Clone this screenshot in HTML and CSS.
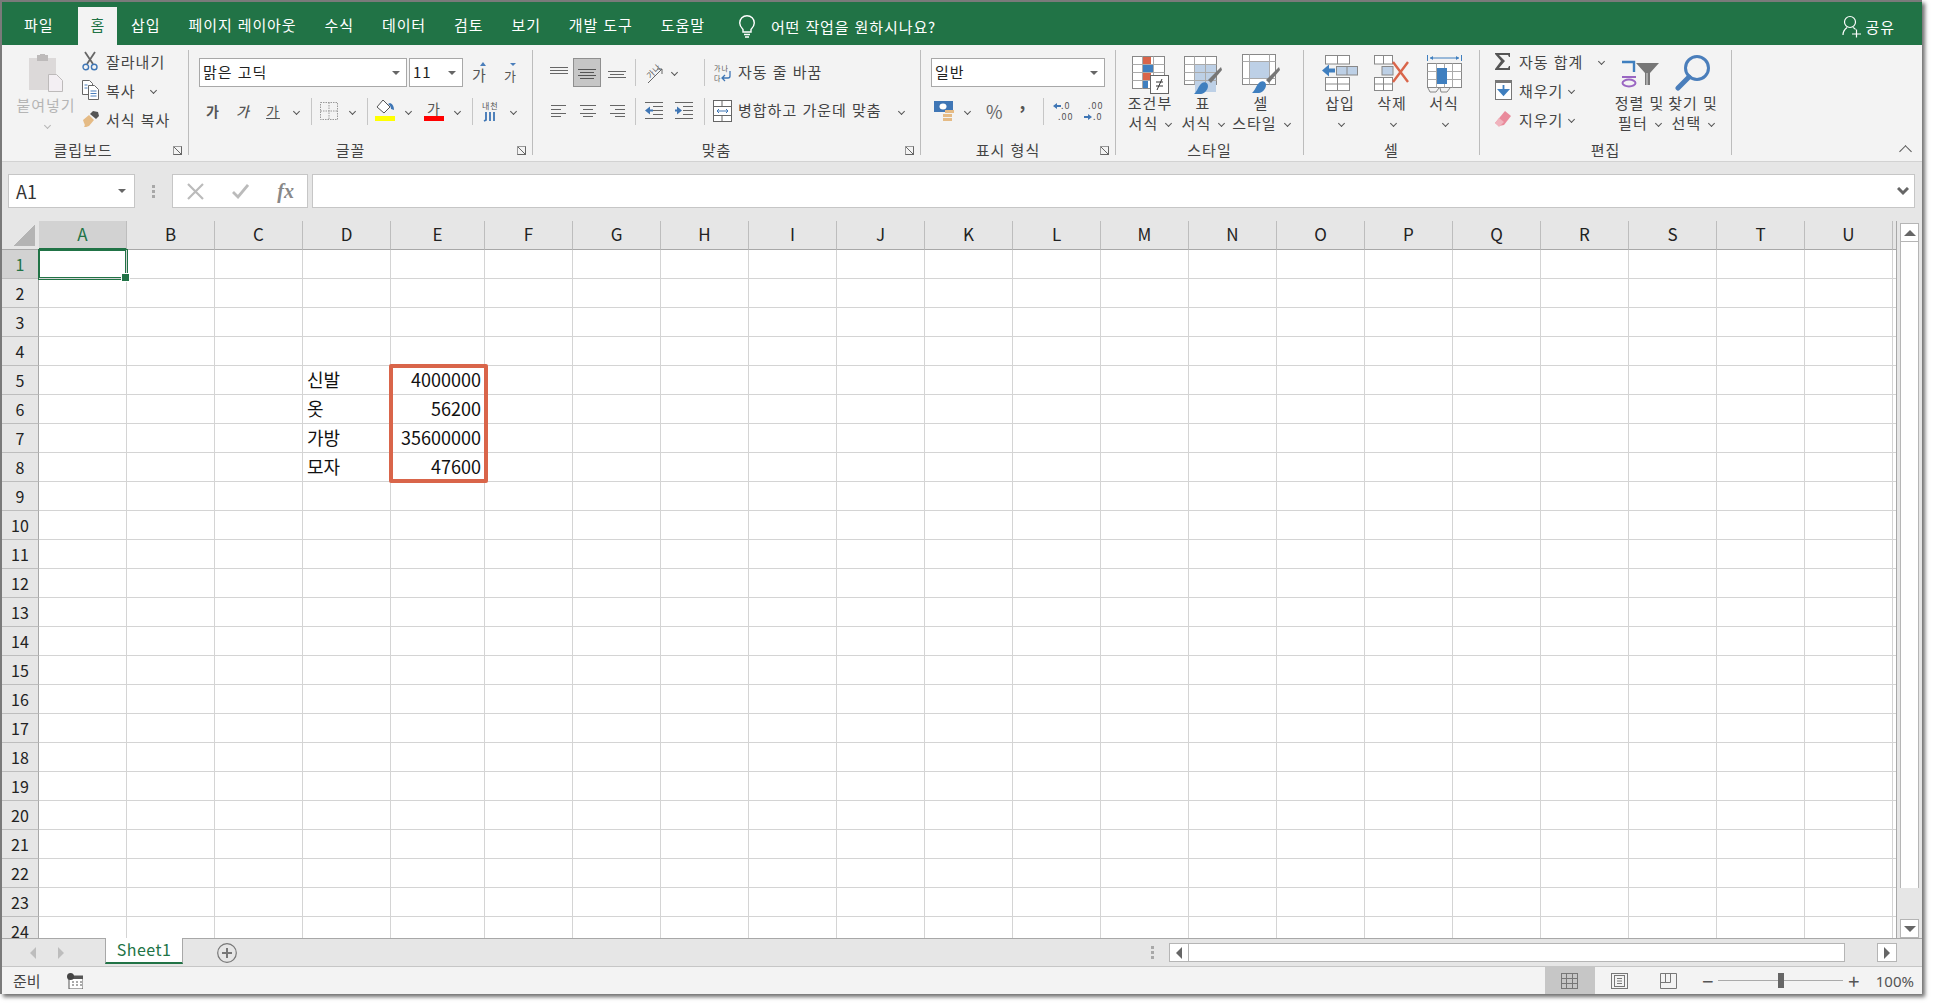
FILE: index.html
```html
<!DOCTYPE html>
<html lang="ko">
<head>
    <meta charset="UTF-8">
    <meta name="viewport" content="width=device-width, initial-scale=1.0">
    <title>Excel</title>
    <link rel="stylesheet" href="styles.css">
</head>
<body>
<div class="window">

    <!-- tabs -->
    <div class="tabbar">
        <div class="tab tab-first">파일</div>
        <div class="tab tab-active">홈</div>
        <div class="tab">삽입</div>
        <div class="tab">페이지 레이아웃</div>
        <div class="tab">수식</div>
        <div class="tab">데이터</div>
        <div class="tab">검토</div>
        <div class="tab">보기</div>
        <div class="tab">개발 도구</div>
        <div class="tab">도움말</div>
        <div class="tell-me">
            <svg width="18" height="24" viewBox="0 0 18 24" fill="none" stroke="#fff" stroke-width="1.4"><path d="M5 15.5C3 13.5 1.700 11.500 1.700 9a7.300 7.300 0 0 1 14.600 0c0 2.500-1.300 4.500-3.300 6.500V18H5z"/><path d="M6 20.500h6M7 23h4"/></svg>
            <span>어떤 작업을 원하시나요?</span>
        </div>
        <div class="share">
            <svg width="20" height="24" viewBox="0 0 20 24" fill="none" stroke="#fff" stroke-width="1.2"><circle cx="8" cy="8" r="5.500"/><path d="M1 21c0-4 2-6 4-7.500M11 13.500c1 .5 2 1.200 2.500 2M10 20h9M14.500 15.500v8"/></svg>
            <span>공유</span>
        </div>
    </div>

    <!-- ribbon -->
    <div class="ribbon">

        <div class="group group-clipboard">
            <div class="group-body">
                <div class="paste">
                    <svg width="34" height="38" viewBox="0 0 34 38"><rect x="0" y="4" width="27" height="32" fill="#dcd9d9"/><rect x="8" y="1" width="11" height="6" fill="#bdbaba"/><rect x="11" y="0" width="5" height="3" fill="#bdbaba"/><path d="M19.500 20.500h8l6 6v11h-14z" fill="#f3eff3" stroke="#bdbaba"/></svg>
                    <div class="big-label label-off">붙여넣기</div>
                    <div class="big-label"><i class="chev chev-off"></i></div>
                </div>
                <div class="small-rows">
                    <div class="small-row">
                        <span class="small-ico"><svg width="16" height="20" viewBox="0 0 16 20" fill="none"><path d="M3 1l8 12M13 1L5 13" stroke="#666" stroke-width="1.800"/><circle cx="3.800" cy="16" r="2.800" stroke="#3f76b5" stroke-width="1.400"/><circle cx="12.200" cy="16" r="2.800" stroke="#3f76b5" stroke-width="1.400"/></svg></span>
                        <span>잘라내기</span>
                    </div>
                    <div class="small-row">
                        <span class="small-ico"><svg width="17" height="20" viewBox="0 0 17 20" fill="#fff" stroke="#666"><path d="M.500.500h7l3 3v11H.500z"/><path d="M6.500 5.500h6l4 4v10h-10z"/><path d="M2.500 5h3M2.500 8h3M8.500 11h6M8.500 13.500h6M8.500 16h6" stroke="#4a7ebb"/></svg></span>
                        <span>복사</span>
                        <span class="chev-slot chev-copy"><i class="chev"></i></span>
                    </div>
                    <div class="small-row">
                        <span class="small-ico"><svg width="18" height="18" viewBox="0 0 18 18"><path d="M1 10l6-5 5 5-5 6c-2 1-4 1-5 1 1-1 1-3 0-4z" fill="#e5bb85"/><path d="M8 4l3-3 5 1 1 4-3 3z" fill="#555"/></svg></span>
                        <span>서식 복사</span>
                    </div>
                </div>
            </div>
            <div class="group-foot foot-clip"><span></span><span>클립보드</span><i class="launcher"></i></div>
        </div>

        <div class="group group-font">
            <div class="group-body rows">
                <div class="row row-top">
                    <div class="combo combo-font"><span>맑은 고딕</span><i class="caret"></i></div>
                    <div class="combo combo-size"><span>11</span><i class="caret"></i></div>
                    <span class="grow"><svg width="16" height="24" viewBox="0 0 16 24"><text x="0" y="20" class="ico-text" font-size="15">가</text><path d="M11 1l3 4H8z" fill="#4a7ebb"/></svg></span>
                    <span class="shrink"><svg width="14" height="24" viewBox="0 0 14 24"><text x="0" y="20" class="ico-text" font-size="13">가</text><path d="M9 5L6 2h6z" fill="#4a7ebb"/></svg></span>
                </div>
                <div class="row">
                    <span class="letter letter-bold">가</span>
                    <span class="letter letter-italic">가</span>
                    <span class="letter letter-under">가</span>
                    <span class="chev-slot"><i class="chev"></i></span>
                    <i class="sep"></i>
                    <div class="split">
                        <svg width="21" height="24" viewBox="0 0 21 24" fill="none" stroke="#999" stroke-dasharray="1.500 1"><rect x="1.500" y="3.500" width="17" height="17"/><path d="M10 3.500v17M1.500 12h17"/></svg>
                        <span class="chev-slot"><i class="chev"></i></span>
                    </div>
                    <i class="sep"></i>
                    <div class="split">
                        <svg width="21" height="24" viewBox="0 0 21 24"><path d="M8 1l7 7-6 6-7-6z" fill="#fff" stroke="#555"/><path d="M15 4c3 1 4 4 4 7l-3-1c0-2-1-4-3-5z" fill="#3f76b5"/><rect x="0" y="17" width="20" height="5" fill="#ffff00"/></svg>
                        <span class="chev-slot"><i class="chev"></i></span>
                    </div>
                    <div class="split split-next">
                        <svg width="21" height="24" viewBox="0 0 21 24"><text x="3" y="15" class="ico-text" font-size="14">가</text><rect x="0" y="17" width="20" height="5" fill="#ff0000"/></svg>
                        <span class="chev-slot"><i class="chev"></i></span>
                    </div>
                    <i class="sep"></i>
                    <div class="split">
                        <svg width="21" height="24" viewBox="0 0 21 24"><text x="2" y="10" class="ico-text" font-size="8">내천</text><path d="M6 13v8l-2 1M10 13v9M14 13v9" fill="none" stroke="#3f76b5" stroke-width="1.800"/></svg>
                        <span class="chev-slot"><i class="chev"></i></span>
                    </div>
                </div>
            </div>
            <div class="group-foot"><span></span><span>글꼴</span><i class="launcher"></i></div>
        </div>

        <div class="group group-align">
            <div class="group-body rows">
                <div class="row row-top">
                    <span class="al"><svg width="18" height="14" viewBox="0 0 18 14" stroke="#666"><path d="M0 1.500h18M0 4.500h18M0 7.500h18"/></svg></span>
                    <span class="al al-on"><svg width="18" height="14" viewBox="0 0 18 14" stroke="#555"><path d="M0 3.500h18M2 6.500h14M0 9.500h18M2 12.500h14"/></svg></span>
                    <span class="al al-last"><svg width="18" height="14" viewBox="0 0 18 14" stroke="#666"><path d="M0 5.500h18M2 8.500h14M0 11.500h18"/></svg></span>
                    <i class="sep sep-align"></i>
                    <span class="orient"><svg width="22" height="24" viewBox="0 0 22 24"><text x="4" y="14" class="ico-text" font-size="8" transform="rotate(-45 11 11)">가나</text><path d="M6 22L20 8M20 8h-5M20 8v5" fill="none" stroke="#666"/></svg></span>
                    <span class="chev-slot"><i class="chev"></i></span>
                    <i class="sep sep-wide"></i>
                    <span class="wrap-ico"><svg width="18" height="20" viewBox="0 0 18 20"><text x="0" y="8" class="ico-text" font-size="7">가나</text><text x="0" y="18" class="ico-text" font-size="7">다</text><path d="M16 8v5q0 2-2 2H8m3-3l-3 3 3 3" fill="none" stroke="#3f76b5" stroke-width="1.300"/></svg></span>
                    <span class="btn-text">자동 줄 바꿈</span>
                </div>
                <div class="row">
                    <span class="al"><svg width="16" height="12" viewBox="0 0 16 12" stroke="#666"><path d="M0 .500h15M0 4.500h10M0 8.500h15M0 11.500h10"/></svg></span>
                    <span class="al al-plain"><svg width="16" height="12" viewBox="0 0 16 12" stroke="#666"><path d="M0 .500h16M3 4.500h10M0 8.500h16M3 11.500h10"/></svg></span>
                    <span class="al al-last"><svg width="16" height="12" viewBox="0 0 16 12" stroke="#666"><path d="M1 .500h15M6 4.500h10M1 8.500h15M6 11.500h10"/></svg></span>
                    <i class="sep sep-align"></i>
                    <span class="indent"><svg width="18" height="18" viewBox="0 0 18 18"><path d="M0 .500h18M8 4.500h10M8 8.500h10M8 12.500h10M0 16.500h18" stroke="#666"/><path d="M0 8.500l5-4v3h3v2H5v3z" fill="#3f76b5"/></svg></span>
                    <span class="indent indent-next"><svg width="18" height="18" viewBox="0 0 18 18"><path d="M0 .500h18M8 4.500h10M8 8.500h10M8 12.500h10M0 16.500h18" stroke="#666"/><path d="M7 8.500l-5-4v3H0v2h2v3z" fill="#3f76b5"/></svg></span>
                    <i class="sep sep-indent"></i>
                    <span class="merge-ico"><svg width="19" height="22" viewBox="0 0 19 22" fill="#fff" stroke="#666"><rect x=".500" y=".500" width="18" height="21"/><path d="M.500 6.500h18M.500 15.500h18M9 .500v6M9 15.500v6"/><path d="M4 11h11M6 9l-2 2 2 2M13 9l2 2-2 2" fill="none" stroke="#3f76b5"/></svg></span>
                    <span class="btn-text">병합하고 가운데 맞춤</span>
                    <span class="chev-slot chev-merge"><i class="chev"></i></span>
                </div>
            </div>
            <div class="group-foot"><span></span><span>맞춤</span><i class="launcher"></i></div>
        </div>

        <div class="group group-number">
            <div class="group-body rows">
                <div class="row row-top">
                    <div class="combo combo-num"><span>일반</span><i class="caret"></i></div>
                </div>
                <div class="row row-num">
                    <div class="split">
                        <svg width="21" height="24" viewBox="0 0 21 24"><rect x="0" y="2" width="19" height="11" fill="#3f76b5"/><ellipse cx="9" cy="7.500" rx="3.500" ry="3" fill="#fff"/><rect x="11" y="11" width="9" height="3" fill="#e5bb85"/><rect x="9" y="15" width="9" height="3" fill="#e5bb85"/><rect x="9" y="19" width="9" height="3" fill="#e5bb85"/></svg>
                        <span class="chev-slot"><i class="chev"></i></span>
                    </div>
                    <span class="percent">%</span>
                    <span class="comma">,</span>
                    <i class="sep sep-num"></i>
                    <span class="dec"><svg width="20" height="22" viewBox="0 0 20 22"><text x="8" y="9" class="ico-text" font-size="9">.0</text><text x="5" y="20" class="ico-text" font-size="9">.00</text><path d="M0 6l4-3v2h4v2H4v2z" fill="#3f76b5"/></svg></span>
                    <span class="dec dec-next"><svg width="20" height="22" viewBox="0 0 20 22"><text x="5" y="9" class="ico-text" font-size="9">.00</text><text x="10" y="20" class="ico-text" font-size="9">.0</text><path d="M9 17l-4-3v2H1v2h4v2z" fill="#3f76b5"/></svg></span>
                </div>
            </div>
            <div class="group-foot"><span></span><span>표시 형식</span><i class="launcher"></i></div>
        </div>

        <div class="group group-styles">
            <div class="group-body bigs">
                <div class="big big-56">
                    <div class="big-ico"><svg width="37" height="38" viewBox="0 0 37 38"><rect x=".500" y=".500" width="32" height="32" fill="#fff" stroke="#888"/><rect x="11" y="1" width="8" height="7" fill="#d9654a"/><rect x="11" y="9" width="11" height="7" fill="#3f7fbf"/><rect x="11" y="17" width="8" height="7" fill="#d9654a"/><rect x="11" y="25" width="5" height="7" fill="#3f7fbf"/><path d="M.500 8.500h32M.500 16.500h32M.500 24.500h32M10.500.500v32M21.500.500v32" stroke="#aaa" fill="none"/><rect x="18.500" y="19.500" width="18" height="18" fill="#fff" stroke="#666"/><path d="M24 26h7M24 30h7M30 23l-5 11" stroke="#333" fill="none"/></svg></div>
                    <div class="big-label">조건부</div>
                    <div class="big-label">서식 <i class="chev"></i></div>
                </div>
                <div class="big big-50">
                    <div class="big-ico"><svg width="38" height="38" viewBox="0 0 38 38"><rect x=".500" y=".500" width="32" height="28" fill="#fff" stroke="#888"/><rect x="11" y="8" width="21" height="28" fill="#bdd0e6"/><path d="M.500 8.500h32M.500 16.500h32M.500 24.500h32M10.500.500v28M21.500.500v28" stroke="#aaa" fill="none"/><path d="M37 11l1 3-11 13-3-3z" fill="#777"/><path d="M10 38c3-2 4-8 8-11 3-2 6 0 6 3 0 4-4 8-7 8z" fill="#3f7fbf"/></svg></div>
                    <div class="big-label">표</div>
                    <div class="big-label">서식 <i class="chev"></i></div>
                </div>
                <div class="big big-66">
                    <div class="big-ico big-ico-up"><svg width="38" height="39" viewBox="0 0 38 39"><rect x=".500" y=".500" width="33" height="30" fill="#fff" stroke="#888"/><rect x="8" y="8" width="19" height="16" fill="#bdd0e6"/><path d="M.500 7.500h33M.500 24.500h33M7.500.500v30M27.500.500v30" stroke="#aaa" fill="none"/><path d="M37 13l1 3-11 13-3-3z" fill="#777"/><path d="M10 39c3-2 4-8 8-11 3-2 6 0 6 3 0 4-4 8-7 8z" fill="#3f7fbf"/></svg></div>
                    <div class="big-label">셀</div>
                    <div class="big-label">스타일 <i class="chev"></i></div>
                </div>
            </div>
            <div class="group-foot group-foot-plain"><span>스타일</span></div>
        </div>

        <div class="group group-cells">
            <div class="group-body bigs">
                <div class="big big-52">
                    <div class="big-ico"><svg width="36" height="36" viewBox="0 0 36 36" fill="#fff" stroke="#888"><rect x="3.500" y=".500" width="24" height="8.500"/><path d="M15.500.500V9"/><rect x="3.500" y="22.500" width="24" height="13"/><path d="M15.500 22.500v13M3.500 29h24"/><rect x="14.500" y="11.500" width="21" height="8.500" fill="#bdd0e6"/><path d="M25 11.500V20"/><path d="M0 15.500l7-6v4h6v4H7v4z" fill="#3f7fbf" stroke="none"/></svg></div>
                    <div class="big-label">삽입</div>
                    <div class="big-label"><i class="chev"></i></div>
                </div>
                <div class="big big-52">
                    <div class="big-ico"><svg width="36" height="36" viewBox="0 0 36 36" fill="#fff" stroke="#888"><rect x=".500" y=".500" width="18" height="8.500"/><path d="M9.500.500V9"/><rect x=".500" y="22.500" width="18" height="13"/><path d="M9.500 22.500v13M.500 29h18"/><rect x="8" y="11.500" width="11" height="8.500" fill="#bdd0e6"/><path d="M19 7l15 20M34 7L19 27" stroke="#d9654a" stroke-width="2.400" fill="none"/></svg></div>
                    <div class="big-label">삭제</div>
                    <div class="big-label"><i class="chev"></i></div>
                </div>
                <div class="big big-52">
                    <div class="big-ico"><svg width="35" height="38" viewBox="0 0 35 38" fill="none"><path d="M.500 0v6M34.500 0v6M3 3h29" stroke="#3f7fbf"/><path d="M3 3l3-2v4zM32 3l-3-2v4z" fill="#3f7fbf"/><rect x=".500" y="8.500" width="34" height="24" fill="#fff" stroke="#888"/><path d="M.500 16.500h34M.500 24.500h34M9.500 8.500v24M17.500 8.500v24M25.500 8.500v24" stroke="#aaa"/><rect x="10" y="13" width="10" height="16" fill="#3f7fbf"/><path d="M1 33l2 4h6l3-4M13 33l1 4h6l3-4" stroke="#888"/></svg></div>
                    <div class="big-label">서식</div>
                    <div class="big-label"><i class="chev"></i></div>
                </div>
            </div>
            <div class="group-foot group-foot-plain"><span>셀</span></div>
        </div>

        <div class="group group-edit">
            <div class="group-body">
                <div class="small-rows small-rows-edit">
                    <div class="small-row">
                        <span class="small-ico"><svg width="17" height="17" viewBox="0 0 17 17"><path d="M0 0h15v4h-1l-1-2H4l6 6-6 7h9l1-2h1v4H0v-1l6-8L0 1z" fill="#555"/></svg></span>
                        <span>자동 합계</span>
                        <span class="chev-slot chev-sum"><i class="chev"></i></span>
                    </div>
                    <div class="small-row">
                        <span class="small-ico"><svg width="17" height="20" viewBox="0 0 17 20"><rect x=".500" y=".500" width="16" height="19" fill="#fff" stroke="#777"/><rect x="0" y="0" width="17" height="3" fill="#777"/><path d="M8.500 5v8M4 10l4.500 5 4.500-5z" stroke="#3f7fbf" stroke-width="1.800" fill="#3f7fbf"/></svg></span>
                        <span>채우기</span>
                        <span class="chev-slot"><i class="chev"></i></span>
                    </div>
                    <div class="small-row">
                        <span class="small-ico"><svg width="16" height="16" viewBox="0 0 16 16"><path d="M10 0l6 5-7 9-5 1-4-3z" fill="#e98a9b"/><path d="M0 12l4-5 5 4-5 5z" fill="#f0b3bd"/></svg></span>
                        <span>지우기</span>
                        <span class="chev-slot"><i class="chev"></i></span>
                    </div>
                </div>
                <div class="bigs">
                    <div class="big big-53">
                        <div class="big-ico big-ico-sort"><svg width="38" height="28" viewBox="0 0 38 28"><path d="M1 2h12v10" fill="none" stroke="#3f7fbf" stroke-width="2.400"/><path d="M1 17h14" stroke="#9a66c2" stroke-width="2"/><ellipse cx="8" cy="23" rx="6.500" ry="3.500" fill="none" stroke="#9a66c2" stroke-width="2"/><path d="M15 3h23l-9 10v12h-5V13z" fill="#777"/><path d="M26 13v12" stroke="#ddd"/></svg></div>
                        <div class="big-label">정렬 및</div>
                        <div class="big-label">필터 <i class="chev"></i></div>
                    </div>
                    <div class="big big-54">
                        <div class="big-ico"><svg width="36" height="36" viewBox="0 0 36 36" fill="none" stroke="#4a7ebb"><circle cx="22" cy="13" r="11.500" stroke-width="3"/><path d="M14 22L3 33" stroke-width="5" stroke-linecap="round"/></svg></div>
                        <div class="big-label">찾기 및</div>
                        <div class="big-label">선택 <i class="chev"></i></div>
                    </div>
                </div>
            </div>
            <div class="group-foot group-foot-plain"><span>편집</span></div>
        </div>

        <div class="ribbon-end"><i class="chev chev-up"></i></div>
    </div>

    <!-- formula bar -->
    <div class="formula">
        <div class="namebox"><span>A1</span><i class="caret"></i></div>
        <div class="grip"><i></i><i></i><i></i></div>
        <div class="fx-box">
            <svg width="17" height="17" viewBox="0 0 17 17" stroke="#bbb" stroke-width="2.200"><path d="M1 1l15 15M16 1L1 16"/></svg>
            <svg width="17" height="15" viewBox="0 0 17 15" fill="none" stroke="#bbb" stroke-width="2.800"><path d="M1 8l5 5L16 1"/></svg>
            <span class="fx">fx</span>
        </div>
        <div class="formula-input"><svg width="12" height="9" viewBox="0 0 12 9" fill="none" stroke="#666" stroke-width="3"><path d="M1 1l5 5 5-5"/></svg></div>
    </div>

    <!-- sheet -->
    <div class="sheet">
        <div class="grid-wrap">
            <table class="grid">
                <colgroup>
                    <col class="col-head"><col class="col"><col class="col"><col class="col"><col class="col"><col class="col-e"><col class="col"><col class="col"><col class="col"><col class="col"><col class="col"><col class="col"><col class="col"><col class="col"><col class="col"><col class="col"><col class="col"><col class="col"><col class="col"><col class="col"><col class="col"><col class="col"><col>
                </colgroup>
                <thead>
                    <tr><th class="corner"><i></i></th><th class="on">A</th><th>B</th><th>C</th><th>D</th><th>E</th><th>F</th><th>G</th><th>H</th><th>I</th><th>J</th><th>K</th><th>L</th><th>M</th><th>N</th><th>O</th><th>P</th><th>Q</th><th>R</th><th>S</th><th>T</th><th>U</th><th class="filler"></th></tr>
                </thead>
                <tbody>
                    <tr><th class="on">1</th><td class="active"></td><td></td><td></td><td></td><td></td><td></td><td></td><td></td><td></td><td></td><td></td><td></td><td></td><td></td><td></td><td></td><td></td><td></td><td></td><td></td><td></td><td></td></tr>
                    <tr><th>2</th><td></td><td></td><td></td><td></td><td></td><td></td><td></td><td></td><td></td><td></td><td></td><td></td><td></td><td></td><td></td><td></td><td></td><td></td><td></td><td></td><td></td><td></td></tr>
                    <tr><th>3</th><td></td><td></td><td></td><td></td><td></td><td></td><td></td><td></td><td></td><td></td><td></td><td></td><td></td><td></td><td></td><td></td><td></td><td></td><td></td><td></td><td></td><td></td></tr>
                    <tr><th>4</th><td></td><td></td><td></td><td></td><td></td><td></td><td></td><td></td><td></td><td></td><td></td><td></td><td></td><td></td><td></td><td></td><td></td><td></td><td></td><td></td><td></td><td></td></tr>
                    <tr><th>5</th><td></td><td></td><td></td><td>신발</td><td class="num">4000000</td><td></td><td></td><td></td><td></td><td></td><td></td><td></td><td></td><td></td><td></td><td></td><td></td><td></td><td></td><td></td><td></td><td></td></tr>
                    <tr><th>6</th><td></td><td></td><td></td><td>옷</td><td class="num">56200</td><td></td><td></td><td></td><td></td><td></td><td></td><td></td><td></td><td></td><td></td><td></td><td></td><td></td><td></td><td></td><td></td><td></td></tr>
                    <tr><th>7</th><td></td><td></td><td></td><td>가방</td><td class="num">35600000</td><td></td><td></td><td></td><td></td><td></td><td></td><td></td><td></td><td></td><td></td><td></td><td></td><td></td><td></td><td></td><td></td><td></td></tr>
                    <tr><th>8</th><td></td><td></td><td></td><td>모자</td><td class="num">47600</td><td></td><td></td><td></td><td></td><td></td><td></td><td></td><td></td><td></td><td></td><td></td><td></td><td></td><td></td><td></td><td></td><td></td></tr>
                    <tr><th>9</th><td></td><td></td><td></td><td></td><td></td><td></td><td></td><td></td><td></td><td></td><td></td><td></td><td></td><td></td><td></td><td></td><td></td><td></td><td></td><td></td><td></td><td></td></tr>
                    <tr><th>10</th><td></td><td></td><td></td><td></td><td></td><td></td><td></td><td></td><td></td><td></td><td></td><td></td><td></td><td></td><td></td><td></td><td></td><td></td><td></td><td></td><td></td><td></td></tr>
                    <tr><th>11</th><td></td><td></td><td></td><td></td><td></td><td></td><td></td><td></td><td></td><td></td><td></td><td></td><td></td><td></td><td></td><td></td><td></td><td></td><td></td><td></td><td></td><td></td></tr>
                    <tr><th>12</th><td></td><td></td><td></td><td></td><td></td><td></td><td></td><td></td><td></td><td></td><td></td><td></td><td></td><td></td><td></td><td></td><td></td><td></td><td></td><td></td><td></td><td></td></tr>
                    <tr><th>13</th><td></td><td></td><td></td><td></td><td></td><td></td><td></td><td></td><td></td><td></td><td></td><td></td><td></td><td></td><td></td><td></td><td></td><td></td><td></td><td></td><td></td><td></td></tr>
                    <tr><th>14</th><td></td><td></td><td></td><td></td><td></td><td></td><td></td><td></td><td></td><td></td><td></td><td></td><td></td><td></td><td></td><td></td><td></td><td></td><td></td><td></td><td></td><td></td></tr>
                    <tr><th>15</th><td></td><td></td><td></td><td></td><td></td><td></td><td></td><td></td><td></td><td></td><td></td><td></td><td></td><td></td><td></td><td></td><td></td><td></td><td></td><td></td><td></td><td></td></tr>
                    <tr><th>16</th><td></td><td></td><td></td><td></td><td></td><td></td><td></td><td></td><td></td><td></td><td></td><td></td><td></td><td></td><td></td><td></td><td></td><td></td><td></td><td></td><td></td><td></td></tr>
                    <tr><th>17</th><td></td><td></td><td></td><td></td><td></td><td></td><td></td><td></td><td></td><td></td><td></td><td></td><td></td><td></td><td></td><td></td><td></td><td></td><td></td><td></td><td></td><td></td></tr>
                    <tr><th>18</th><td></td><td></td><td></td><td></td><td></td><td></td><td></td><td></td><td></td><td></td><td></td><td></td><td></td><td></td><td></td><td></td><td></td><td></td><td></td><td></td><td></td><td></td></tr>
                    <tr><th>19</th><td></td><td></td><td></td><td></td><td></td><td></td><td></td><td></td><td></td><td></td><td></td><td></td><td></td><td></td><td></td><td></td><td></td><td></td><td></td><td></td><td></td><td></td></tr>
                    <tr><th>20</th><td></td><td></td><td></td><td></td><td></td><td></td><td></td><td></td><td></td><td></td><td></td><td></td><td></td><td></td><td></td><td></td><td></td><td></td><td></td><td></td><td></td><td></td></tr>
                    <tr><th>21</th><td></td><td></td><td></td><td></td><td></td><td></td><td></td><td></td><td></td><td></td><td></td><td></td><td></td><td></td><td></td><td></td><td></td><td></td><td></td><td></td><td></td><td></td></tr>
                    <tr><th>22</th><td></td><td></td><td></td><td></td><td></td><td></td><td></td><td></td><td></td><td></td><td></td><td></td><td></td><td></td><td></td><td></td><td></td><td></td><td></td><td></td><td></td><td></td></tr>
                    <tr><th>23</th><td></td><td></td><td></td><td></td><td></td><td></td><td></td><td></td><td></td><td></td><td></td><td></td><td></td><td></td><td></td><td></td><td></td><td></td><td></td><td></td><td></td><td></td></tr>
                    <tr><th>24</th><td></td><td></td><td></td><td></td><td></td><td></td><td></td><td></td><td></td><td></td><td></td><td></td><td></td><td></td><td></td><td></td><td></td><td></td><td></td><td></td><td></td><td></td></tr>
                </tbody>
            </table>
            <div class="highlight"></div>
        </div>
        <div class="vscroll">
            <div class="sb-btn"><i class="tri tri-up"></i></div>
            <div class="vthumb"></div>
            <div class="sb-btn"><i class="tri tri-down"></i></div>
        </div>
    </div>

    <!-- sheet tabs -->
    <div class="sheetbar">
        <div class="sheet-nav"><i class="tri tri-left tri-off"></i><i class="tri tri-right tri-off"></i></div>
        <div class="sheet-tab">Sheet1</div>
        <div class="sheet-add">
            <svg width="20" height="20" viewBox="0 0 20 20" fill="none" stroke="#777"><circle cx="10" cy="10" r="9.300" stroke-width="1.200"/><path d="M10 5v10M5 10h10" stroke-width="2"/></svg>
        </div>
        <div class="grip grip-sheet"><i></i><i></i><i></i></div>
        <div class="hscroll">
            <div class="sb-btn sb-btn-h"><i class="tri tri-left"></i></div>
            <div class="hthumb"></div>
            <div class="sb-btn sb-btn-h"><i class="tri tri-right"></i></div>
        </div>
    </div>

    <!-- status bar -->
    <div class="status">
        <span class="ready">준비</span>
        <svg class="macro" width="16" height="16" viewBox="0 0 16 16"><rect x="2" y="3" width="14" height="13" fill="#fff" stroke="#555"/><rect x="2" y="3" width="14" height="3" fill="#555"/><circle cx="3.500" cy="3.500" r="3.500" fill="#444"/><path d="M5 9h2M9 9h2M13 9h2M5 12h2M9 12h2M13 12h2" stroke="#555"/></svg>
        <div class="status-right">
            <div class="view view-on"><svg width="17" height="16" viewBox="0 0 17 16" fill="none" stroke="#777"><rect x=".500" y=".500" width="16" height="15"/><path d="M.500 5.500h16M.500 10.500h16M5.500.500v15M11.500.500v15"/></svg></div>
            <div class="view"><svg width="17" height="16" viewBox="0 0 17 16" fill="none" stroke="#777"><rect x=".500" y=".500" width="16" height="15"/><rect x="3.500" y="2.500" width="10" height="11"/><path d="M6 5.500h5M6 8h5M6 10.500h5"/></svg></div>
            <div class="view view-last"><svg width="17" height="16" viewBox="0 0 17 16" fill="none" stroke="#777"><path d="M.500.500h16v15H.500zM.500 9.500h10V.500M5.500.500v9"/></svg></div>
            <span class="zoom-btn">−</span>
            <div class="slider"><i></i></div>
            <span class="zoom-btn zoom-plus">+</span>
            <span class="zoom-val">100%</span>
        </div>
    </div>
</div>
</body>
</html>
```

FILE: styles.css
```css
* {
    box-sizing: border-box;
}

html, body {
    margin: 0;
    height: 100%;
    overflow: hidden;
    background: #ffffff;
}

body {
    font-family: 'Noto Sans CJK KR', 'Noto Sans', sans-serif;
    font-size: 15px;
    color: #444;
}

i {
    display: block;
}

svg {
    display: block;
    flex-shrink: 0;
}

.ico-text {
    font-family: 'Noto Sans CJK KR', sans-serif;
    fill: #555;
}

.window {
    width: 1922px;
    height: 994px;
    border-top: 2px solid #7a7a7a;
    border-left: 2px solid #7a7a7a;
    box-shadow: 3px 3px 4px #6f6f6f;
    display: flex;
    flex-direction: column;
}

/* tabs */
.tabbar {
    height: 43px;
    background: #217346;
    display: flex;
    align-items: flex-end;
    color: #fff;
    letter-spacing: 0.9px;
}

.tab {
    height: 38px;
    line-height: 36px;
    padding: 0 14px;
    white-space: nowrap;
}

.tab-first {
    margin-left: 8px;
}

.tab-active {
    margin-left: 11px;
    padding: 0 12px;
    background: #f3f3f3;
    color: #217346;
}

.tell-me {
    height: 38px;
    margin-left: 19px;
    display: flex;
    align-items: center;
    gap: 15px;
}

.share {
    height: 38px;
    margin-left: auto;
    margin-right: 27px;
    display: flex;
    align-items: center;
    gap: 4px;
}

/* ribbon */
.ribbon {
    height: 117px;
    background: #f3f3f3;
    border-bottom: 1px solid #d2d2d2;
    display: flex;
    padding-top: 5px;
    letter-spacing: 1px;
    white-space: nowrap;
}

.group {
    height: 105px;
    border-right: 1px solid #bcbcbc;
    display: flex;
    flex-direction: column;
    flex-shrink: 0;
}

.group-clipboard { width: 187px; }
.group-font { width: 344px; }
.group-align { width: 388px; }
.group-number { width: 195px; }
.group-styles { width: 188px; }
.group-cells { width: 176px; }
.group-edit { width: 252px; }

.group-body {
    height: 90px;
    display: flex;
}

.group-foot {
    height: 15px;
    line-height: 20px;
    display: grid;
    grid-template-columns: 1fr auto 1fr;
    padding-right: 20px;
}

.foot-clip {
    padding-right: 24px;
}

.foot-clip .launcher {
    margin-right: -18px;
}

.group-foot-plain {
    grid-template-columns: 1fr;
    text-align: center;
    padding-right: 0;
}

.launcher {
    justify-self: end;
    margin-top: 6px;
    margin-right: -14px;
    width: 9px;
    height: 9px;
    border: 1px solid #999;
    border-right-color: #666;
    border-bottom-color: #666;
    background: linear-gradient(45deg, transparent 46%, #666 46%, #666 56%, transparent 56%);
}

.chev {
    display: inline-block;
    width: 5px;
    height: 5px;
    border-right: 1px solid #555;
    border-bottom: 1px solid #555;
    transform: rotate(45deg);
    vertical-align: 3px;
}

.big-label .chev {
    margin-left: 3px;
}

.chev-off {
    border-color: #b5b5b5;
}

.chev-up {
    width: 9px;
    height: 9px;
    transform: rotate(225deg);
}

.chev-slot {
    width: 16px;
    display: flex;
    justify-content: center;
    flex-shrink: 0;
}

.caret {
    width: 0;
    height: 0;
    border-left: 4px solid transparent;
    border-right: 4px solid transparent;
    border-top: 4px solid #666;
}

.big-label {
    height: 20px;
    line-height: 20px;
    text-align: center;
}

.label-off {
    color: #b5b5b5;
}

/* clipboard */
.paste {
    width: 72px;
    margin-left: 8px;
    padding-top: 4px;
    display: flex;
    flex-direction: column;
    align-items: center;
}

.paste .big-label:first-of-type {
    margin-top: 3px;
}

.small-rows {
    display: flex;
    flex-direction: column;
    gap: 7px;
}

.small-row {
    height: 22px;
    display: flex;
    align-items: center;
}

.small-ico {
    width: 24px;
    flex-shrink: 0;
}

.chev-copy {
    margin-left: 10px;
}

/* shared row layout */
.rows {
    flex-direction: column;
    gap: 12px;
    padding-top: 8px;
}

.row {
    height: 24px;
    display: flex;
    align-items: center;
}

.row-top {
    height: 29px;
}

.sep {
    width: 1px;
    height: 27px;
    margin: 0 7px;
    background: #c6c6c6;
    flex-shrink: 0;
}

.split {
    display: flex;
    align-items: center;
    gap: 4px;
}

.split-next {
    margin-left: 8px;
}

/* font group */
.group-font .row {
    padding-left: 9px;
}

.combo {
    height: 29px;
    background: #fff;
    border: 1px solid #a8a8a8;
    display: flex;
    align-items: center;
    justify-content: space-between;
    padding: 0 6px 0 3px;
    color: #222;
    letter-spacing: 1px;
}

.combo span {
    margin-top: -3px;
}

.combo-font {
    width: 208px;
    margin-left: 1px;
}

.combo-size {
    width: 54px;
    margin-left: 2px;
}

.grow {
    margin-left: 9px;
}

.shrink {
    margin-left: 16px;
}

.letter {
    width: 30px;
    text-align: center;
    font-size: 14px;
    color: #555;
}

.letter-bold { font-weight: 700; }
.letter-italic { font-style: italic; font-weight: 500; }
.letter-under { text-decoration: underline; }

/* alignment group */
.group-align .row {
    padding-left: 12px;
}

.al {
    width: 28px;
    height: 29px;
    display: flex;
    align-items: center;
    justify-content: center;
}

.al-on {
    background: #c6c6c6;
    border: 1px solid #8f8f8f;
}

.al-plain {
    width: 30px;
}

.al-last {
    margin-left: 2px;
}

.al-plain + .al-last {
    margin-left: 0;
}

.sep-align {
    margin: 0 0 0 4px;
}

.orient {
    margin-left: 6px;
    width: 24px;
}

.sep-wide {
    margin: 0 0 0 22px;
}

.sep-indent {
    margin: 0 0 0 11px;
}

.wrap-ico {
    margin-left: 9px;
}

.btn-text {
    margin-left: 6px;
    margin-top: -3px;
}

.indent {
    margin-left: 9px;
}

.indent-next {
    margin-left: 12px;
}

.merge-ico {
    margin-left: 8px;
}

.chev-merge {
    margin-left: 12px;
}

/* number group */
.group-number .row {
    padding-left: 10px;
}

.combo-num {
    width: 174px;
}

.row-num .split {
    margin-left: 3px;
}

.percent {
    width: 16px;
    margin-left: 11px;
    font-size: 18px;
    color: #666;
    text-align: center;
}

.comma {
    width: 16px;
    margin-left: 13px;
    margin-bottom: 20px;
    font-size: 18px;
    font-weight: 700;
    color: #555;
    text-align: center;
    line-height: 14px;
}

.sep-num {
    margin: 0 0 0 12px;
}

.dec {
    margin-left: 9px;
}

.dec-next {
    margin-left: 10px;
}

/* big buttons */
.bigs {
    display: flex;
}

.group-styles .bigs {
    padding-left: 6px;
}

.group-cells .bigs {
    padding-left: 10px;
}

.big {
    display: flex;
    flex-direction: column;
    align-items: center;
}

.big-50 { width: 50px; }
.big-52 { width: 52px; }
.big-53 { width: 53px; }
.big-54 { width: 54px; }
.big-56 { width: 56px; }
.big-66 { width: 66px; }

.big-ico {
    height: 43px;
    padding-top: 6px;
}

.big-ico-up {
    padding-top: 4px;
}

.big-ico-sort {
    padding-top: 10px;
}

.group-cells .big-ico,
.group-edit .big-ico {
    padding-top: 5px;
}

.group-edit .big-ico-sort {
    padding-top: 10px;
}

.small-rows-edit {
    width: 118px;
    margin-left: 15px;
}

.chev-sum {
    margin-left: 10px;
}

.ribbon-end {
    flex: 1;
    display: flex;
    align-items: flex-end;
    justify-content: flex-end;
    padding: 0 12px 5px 0;
}

/* formula bar */
.formula {
    height: 59px;
    flex-shrink: 0;
    background: #e6e6e6;
    padding: 12px 6px 13px 6px;
    display: flex;
    align-items: stretch;
}

.namebox {
    width: 127px;
    background: #fff;
    border: 1px solid #c6c6c6;
    display: flex;
    align-items: center;
    justify-content: space-between;
    padding: 0 8px 0 7px;
    font-size: 18px;
    color: #333;
}

.grip {
    width: 37px;
    display: flex;
    flex-direction: column;
    align-items: center;
    justify-content: center;
    gap: 2px;
}

.grip i {
    width: 3px;
    height: 3px;
    background: #a8a8a8;
}

.fx-box {
    width: 136px;
    background: #fff;
    border: 1px solid #c6c6c6;
    display: flex;
    align-items: center;
    justify-content: space-between;
    padding: 0 13px 0 14px;
}

.fx {
    font-family: 'Liberation Serif', serif;
    font-style: italic;
    font-weight: 700;
    font-size: 20px;
    color: #888;
}

.formula-input {
    width: 1603px;
    margin-left: 4px;
    background: #fff;
    border: 1px solid #c6c6c6;
    display: flex;
    align-items: center;
    justify-content: flex-end;
    padding-right: 5px;
}

/* sheet */
.sheet {
    height: 717px;
    flex-shrink: 0;
    background: #e6e6e6;
    display: flex;
}

.grid-wrap {
    width: 1895px;
    height: 717px;
    overflow: hidden;
    position: relative;
    background: #fff;
    border-right: 1px solid #a8a8a8;
}

.grid {
    width: 1895px;
    table-layout: fixed;
    border-collapse: separate;
    border-spacing: 0;
}

.col-head { width: 37px; }
.col { width: 88px; }
.col-e { width: 94px; }

.grid th,
.grid td {
    height: 29px;
    padding: 0;
    overflow: hidden;
    white-space: nowrap;
}

.grid td {
    font-size: 18px;
    line-height: 26px;
    color: #111;
    padding: 0 0 2px 4px;
    border-right: 1px solid #d4d4d4;
    border-bottom: 1px solid #d4d4d4;
}

.grid td:last-child {
    border-right: none;
}

.grid td.num {
    text-align: right;
    padding: 0 3px 2px 0;
}

.grid th {
    background: #e6e6e6;
    font-weight: 400;
    font-size: 17px;
    line-height: 26px;
    color: #222;
    text-align: center;
}

.grid thead th {
    padding-bottom: 2px;
    border-right: 1px solid #bdbdbd;
    border-bottom: 1px solid #a8a8a8;
}

.grid tbody th {
    font-size: 16px;
    border-right: 1px solid #a8a8a8;
    border-bottom: 1px solid #bdbdbd;
}

.grid thead th.filler {
    border-right: none;
}

.grid th.on {
    background: #d2d2d2;
    color: #217346;
}

.grid thead th.on {
    padding-bottom: 1px;
    border-bottom: 2px solid #217346;
}

.grid thead .corner {
    padding: 4px 3px 3px 11px;
    border-right-color: #e6e6e6;
}

.corner i {
    width: 22px;
    height: 21px;
    background: linear-gradient(135deg, transparent 50%, #b4b4b4 50%);
}

.grid td.active {
    position: relative;
    overflow: visible;
    box-shadow: 0 0 0 1px #217346, inset 0 0 0 1px #217346;
}

.grid td.active::after {
    content: "";
    position: absolute;
    right: -4px;
    bottom: -4px;
    width: 7px;
    height: 7px;
    background: #217346;
    border: 1px solid #fff;
}

.highlight {
    position: absolute;
    left: 387px;
    top: 143px;
    width: 99px;
    height: 119px;
    border: 4px solid #d9654a;
    border-radius: 2px;
}

.vscroll {
    flex: 1;
    display: flex;
    flex-direction: column;
    padding: 2px 3px 0 3px;
}

.sb-btn {
    height: 19px;
    background: #fff;
    border: 1px solid #b5b5b5;
    display: flex;
    align-items: center;
    justify-content: center;
    flex-shrink: 0;
}

.vthumb {
    height: 646px;
    background: #fff;
    border-left: 1px solid #b5b5b5;
    border-right: 1px solid #b5b5b5;
    margin-bottom: 31px;
}

.tri {
    width: 0;
    height: 0;
    border: 5px solid transparent;
}

.tri-up { border-top: none; border-bottom: 6px solid #666; border-left-width: 6px; border-right-width: 6px; }
.tri-down { border-bottom: none; border-top: 6px solid #666; border-left-width: 6px; border-right-width: 6px; }
.tri-left { border-left: none; border-right: 6px solid #666; border-top-width: 6px; border-bottom-width: 6px; }
.tri-right { border-right: none; border-left: 6px solid #666; border-top-width: 6px; border-bottom-width: 6px; }
.tri-left.tri-off { border-right-color: #bdbdbd; }
.tri-right.tri-off { border-left-color: #bdbdbd; }

/* sheet tabs */
.sheetbar {
    height: 29px;
    flex-shrink: 0;
    background: #e6e6e6;
    border-top: 1px solid #a8a8a8;
    border-bottom: 1px solid #c6c6c6;
    display: flex;
}

.sheet-nav {
    width: 103px;
    display: flex;
    align-items: center;
    gap: 22px;
    padding-left: 28px;
}

.sheet-tab {
    width: 78px;
    height: 26px;
    margin-top: -1px;
    background: #fff;
    border-left: 1px solid #a8a8a8;
    border-right: 1px solid #a8a8a8;
    border-bottom: 2px solid #217346;
    color: #217346;
    font-size: 16px;
    line-height: 22px;
    text-align: center;
    letter-spacing: 0.5px;
}

.sheet-add {
    margin-left: 34px;
    width: 20px;
    display: flex;
    align-items: center;
}

.grip-sheet {
    width: 20px;
    margin-left: 905px;
}

.hscroll {
    width: 728px;
    margin-left: 7px;
    padding-top: 4px;
    display: flex;
    height: 23px;
}

.sb-btn-h {
    width: 20px;
    height: 19px;
}

.hthumb {
    width: 656px;
    height: 19px;
    background: #fff;
    border-top: 1px solid #b5b5b5;
    border-bottom: 1px solid #b5b5b5;
    border-right: 1px solid #b5b5b5;
    margin-right: 32px;
}

/* status bar */
.status {
    height: 27px;
    flex-shrink: 0;
    background: #f3f3f3;
    display: flex;
    align-items: center;
    padding-left: 11px;
    font-size: 15px;
    color: #444;
}

.macro {
    margin-left: 26px;
}

.status-right {
    margin-left: auto;
    height: 100%;
    display: flex;
    align-items: center;
    padding-right: 8px;
}

.view {
    width: 50px;
    height: 100%;
    display: flex;
    align-items: center;
    justify-content: center;
}

.view-on {
    background: #c6c6c6;
}

.view-last {
    width: 48px;
}

.zoom-btn {
    width: 14px;
    margin-left: 8px;
    text-align: center;
    font-size: 20px;
    line-height: 20px;
    color: #555;
}

.zoom-plus {
    margin-left: 4px;
}

.slider {
    width: 125px;
    height: 15px;
    margin-left: 3px;
    background: linear-gradient(#aaa, #aaa) center / 100% 1px no-repeat;
}

.slider i {
    width: 6px;
    height: 15px;
    margin-left: 60px;
    background: #666;
}

.zoom-val {
    margin-left: 15px;
    font-family: 'Noto Sans', sans-serif;
    font-size: 15px;
    color: #555;
}
```
